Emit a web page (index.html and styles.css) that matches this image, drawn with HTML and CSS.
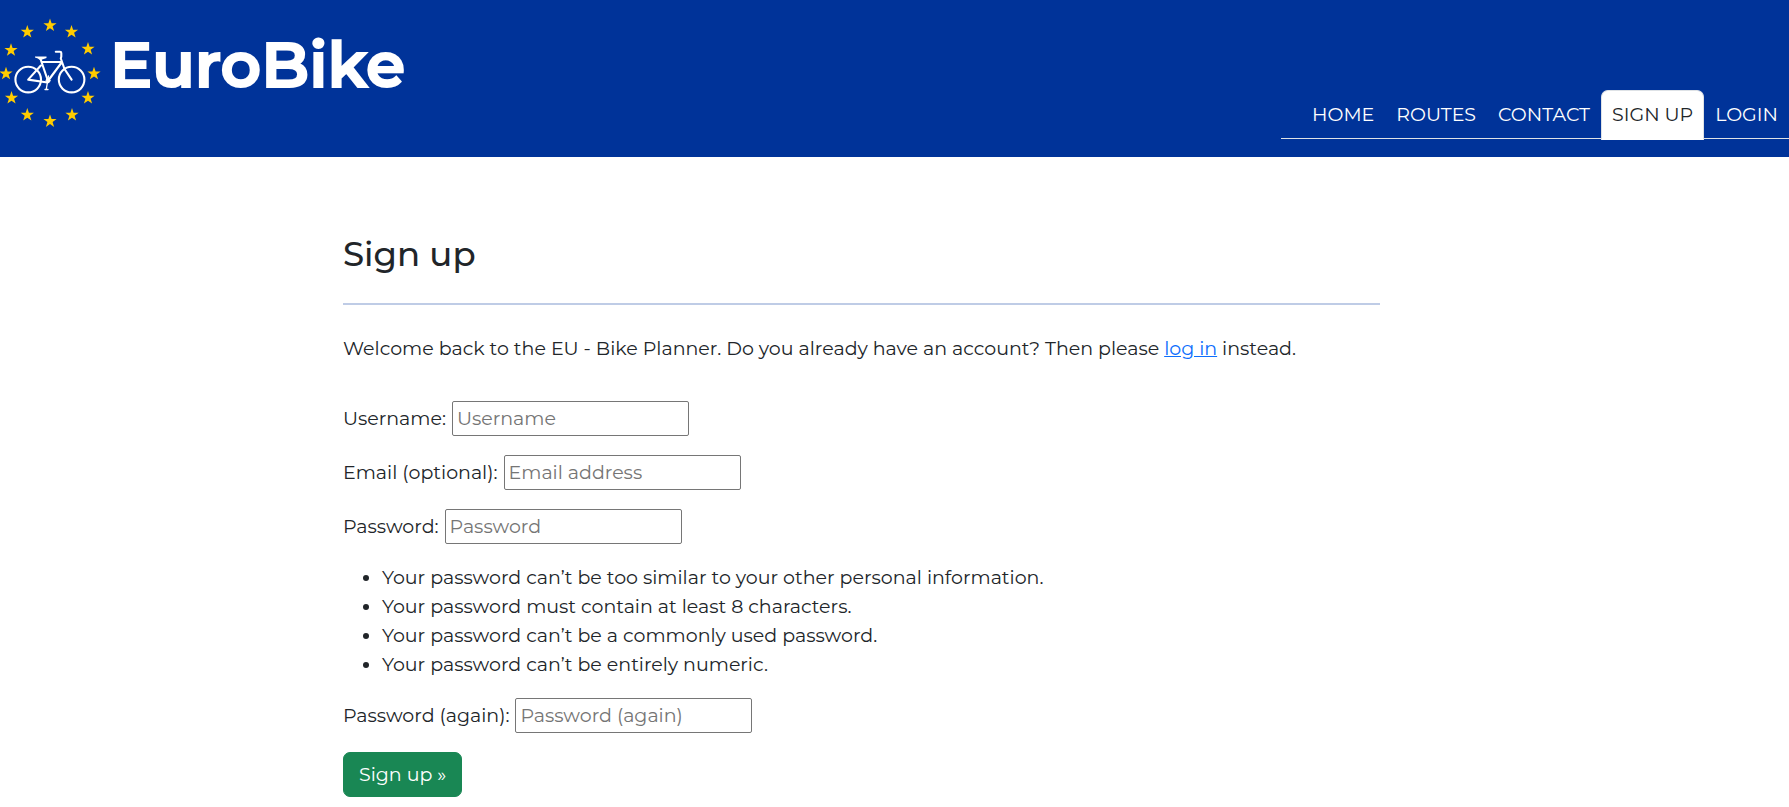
FILE: index.html
```html
<!DOCTYPE html>
<html lang="en">
<head>
<meta charset="utf-8">
<meta name="viewport" content="width=device-width, initial-scale=1">
<title>EuroBike - Sign up</title>
<link rel="stylesheet" href="styles.css">
</head>
<body>
<header class="site-header">
  <div class="brand">
    <svg class="logo" viewBox="0 0 102 157" aria-hidden="true">
      <defs><path id="star" d="M0-6.9 1.6-2.2H6.6L2.6.8 4.1 5.6 0 2.7-4.1 5.6-2.6.8-6.6-2.2H-1.6Z"/></defs>
      <g fill="#fc0">
        <use href="#star" x="50" y="25.5"/><use href="#star" x="71.5" y="32"/><use href="#star" x="88" y="49"/>
        <use href="#star" x="94" y="73.7"/><use href="#star" x="88" y="98"/><use href="#star" x="72" y="115"/>
        <use href="#star" x="50" y="121.3"/><use href="#star" x="27.3" y="115"/><use href="#star" x="11.5" y="98"/>
        <use href="#star" x="6" y="73.7"/><use href="#star" x="11" y="50.2"/><use href="#star" x="27.3" y="32"/>
      </g>
      <g fill="none" stroke="#fff" stroke-width="2.1" stroke-linecap="round" stroke-linejoin="round">
        <circle cx="28.2" cy="79.6" r="12.8"/><circle cx="71.6" cy="79.6" r="12.8"/>
        <path d="M40.5 59 48 81M42 62H62L49 79.5M40.8 65.5 28.2 79.6 47.5 82.5M55.8 51.7H60Q61.3 51.7 61.3 53V56.5L60.8 58.5 64.5 69 71.6 79.6"/>
        <path stroke-width="1.3" d="M48.5 76 46.3 89M45 89.5H48"/>
        <circle cx="48" cy="80.7" r="2" fill="#fff" stroke-width="1"/>
      </g>
      <path fill="#fff" d="M35 56.4H46.5V58L41.5 59.8H39.5Q38.5 58.4 35 57.6Z"/>
    </svg>
    <a class="brand-name" href="#">EuroBike</a>
  </div>
  <nav class="tabs" aria-label="Main">
    <a class="tab" href="#">HOME</a>
    <a class="tab" href="#">ROUTES</a>
    <a class="tab" href="#">CONTACT</a>
    <a class="tab tab-active" href="#" aria-current="page">SIGN UP</a>
    <a class="tab" href="#">LOGIN</a>
  </nav>
</header>
<main class="page">
  <div class="content">
    <h1 class="title">Sign up</h1>
    <hr class="rule">
    <p class="intro">Welcome back to the EU - Bike Planner. Do you already have an account? Then please <a class="link" href="#">log in</a> instead.</p>
    <form class="form">
      <div class="field"><label for="username">Username:</label><input class="input" id="username" type="text" placeholder="Username"></div>
      <div class="field"><label for="email">Email (optional):</label><input class="input" id="email" type="email" placeholder="Email address"></div>
      <div class="field"><label for="password">Password:</label><input class="input" id="password" type="password" placeholder="Password"></div>
      <ul class="hints">
        <li>Your password can’t be too similar to your other personal information.</li>
        <li>Your password must contain at least 8 characters.</li>
        <li>Your password can’t be a commonly used password.</li>
        <li>Your password can’t be entirely numeric.</li>
      </ul>
      <div class="field"><label for="password2">Password (again):</label><input class="input" id="password2" type="password" placeholder="Password (again)"></div>
      <button class="submit" type="submit">Sign up »</button>
    </form>
  </div>
</main>
</body>
</html>
```
FILE: styles.css
```css
* { box-sizing: border-box; }

body {
  margin: 0;
  background: #fff;
  color: #212529;
  font-family: Montserrat, Inter, sans-serif;
  font-size: 19px;
  font-weight: 400;
  line-height: 29px;
}

.site-header {
  display: flex;
  justify-content: space-between;
  align-items: flex-end;
  background: #039;
}

.brand {
  display: flex;
  align-items: flex-start;
  gap: 8px;
}

.logo {
  display: block;
  width: 102px;
  height: 157px;
}

.brand-name {
  padding-top: 23px;
  color: #fff;
  font-size: 63px;
  font-weight: 600;
  line-height: 84px;
  text-decoration: none;
  -webkit-text-stroke: 2px #fff;
}

.tabs {
  display: flex;
  margin-bottom: 18px;
  padding-left: 20px;
  border-bottom: 1px solid #dee2e6;
}

.tab {
  margin-bottom: -2px;
  padding: 9px 10px;
  border: 1px solid transparent;
  border-radius: 7px 7px 0 0;
  color: #fff;
  line-height: 30px;
  text-decoration: none;
}

.tab-active {
  border-color: #dee2e6 #dee2e6 #fff;
  background: #fff;
  color: #212529;
}

.page {
  display: grid;
  grid-template-columns: 343fr 1037fr 409fr;
}

.content {
  grid-column: 2;
  padding-top: 77px;
}

.title {
  margin: 0;
  font-size: 34px;
  font-weight: 500;
  line-height: 40px;
}

.rule {
  height: 2px;
  margin: 29px 0;
  border: 0;
  background: #bfcce6;
}

.intro {
  margin: 0 0 38px;
}

.link {
  color: #0d6efd;
}

.form {
  display: flex;
  flex-direction: column;
  align-items: flex-start;
  gap: 19px;
}

.field {
  display: flex;
  align-items: center;
  gap: 6px;
}

.input {
  width: 237px;
  height: 35px;
  padding: 1px 4px;
  border: 1px solid #767676;
  border-radius: 2px;
  color: #212529;
  font: inherit;
}

.input::placeholder {
  color: #757575;
}

.hints {
  margin: 0;
  padding-left: 39px;
}

.submit {
  padding: 7px 15px;
  border: 1px solid #198754;
  border-radius: 7px;
  background: #198754;
  color: #fff;
  font: inherit;
}
```
